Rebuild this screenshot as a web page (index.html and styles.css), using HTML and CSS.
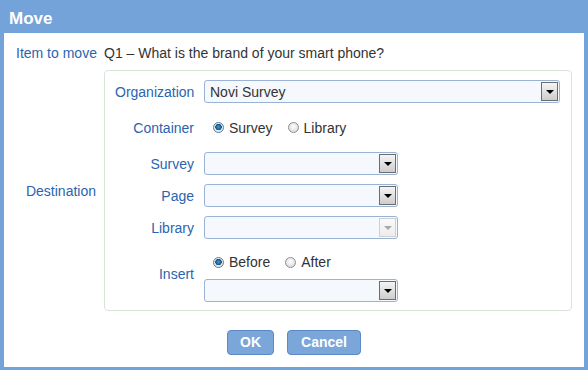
FILE: index.html
```html
<!DOCTYPE html>
<html>
<head>
<meta charset="utf-8">
<link rel="stylesheet" href="styles.css">
</head>
<body>
<div class="dialog">
  <div class="title">Move</div>
  <div class="content">
    <div class="main">
      <div class="lbl">Item to move</div>
      <div class="item">Q1 – What is the brand of your smart phone?</div>
      <div class="lbl dest">Destination</div>
      <div class="fs">
        <div class="flbl">Organization</div>
        <div class="select wide"><span class="val">Novi Survey</span><span class="arrow"></span></div>

        <div class="flbl">Container</div>
        <div class="radios">
          <span class="opt"><span class="radio on"></span>Survey</span>
          <span class="opt"><span class="radio"></span>Library</span>
        </div>

        <div class="flbl">Survey</div>
        <div class="select"><span class="val"></span><span class="arrow"></span></div>

        <div class="flbl">Page</div>
        <div class="select"><span class="val"></span><span class="arrow"></span></div>

        <div class="flbl">Library</div>
        <div class="select disabled"><span class="val"></span><span class="arrow"></span></div>

        <div class="flbl insert">Insert</div>
        <div class="insctl">
          <div class="radios ins">
            <span class="opt"><span class="radio on"></span>Before</span>
            <span class="opt"><span class="radio"></span>After</span>
          </div>
          <div class="select"><span class="val"></span><span class="arrow"></span></div>
        </div>
      </div>
    </div>
    <div class="buttons">
      <button class="btn ok">OK</button>
      <button class="btn cancel">Cancel</button>
    </div>
  </div>
</div>
</body>
</html>
```
FILE: styles.css
```css
html, body {
  margin: 0;
  padding: 0;
}
body {
  font-family: "Liberation Sans", Arial, sans-serif;
  font-size: 14px;
  color: #333;
}
.dialog {
  width: 588px;
  height: 370px;
  box-sizing: border-box;
  background: #74a3d9;
  padding: 0 4px 3px 4px;
  display: flex;
  flex-direction: column;
}
.title {
  height: 33px;
  box-sizing: border-box;
  padding: 4px 0 0 5px;
  line-height: 29px;
  color: #fff;
  font-weight: bold;
  font-size: 17px;
}
.content {
  flex: 1;
  background: #fff;
  padding: 12px 12px 0 12px;
  display: flex;
  flex-direction: column;
}
.main {
  display: grid;
  grid-template-columns: 80px 1fr;
  column-gap: 8px;
  row-gap: 9px;
}
.lbl {
  color: #2b64ae;
  text-align: right;
  line-height: 16px;
  white-space: nowrap;
}
.item {
  line-height: 16px;
  white-space: nowrap;
}
.dest {
  align-self: center;
}
.fs {
  border: 1px solid #d9e4d9;
  border-radius: 4px;
  padding: 9px 11px 8px 10px;
  display: grid;
  grid-template-columns: 79px 1fr;
  column-gap: 10px;
  row-gap: 9px;
  grid-template-rows: 23px 31px 23px 23px 23px auto;
}
.flbl {
  color: #2b64ae;
  text-align: right;
  align-self: center;
  line-height: 16px;
  white-space: nowrap;
}
.flbl.insert {
  align-self: start;
  padding-top: 18px;
}
.select {
  width: 194px;
  height: 23px;
  box-sizing: border-box;
  border: 1px solid #9ab2d4;
  border-radius: 3px;
  background: #f5f8fc;
  display: flex;
  align-items: center;
}
.select.wide {
  width: auto;
}
.val {
  flex: 1;
  padding-left: 5px;
  line-height: 16px;
  color: #333;
}
.arrow {
  width: 17px;
  height: 19px;
  box-sizing: border-box;
  margin-right: 1px;
  border: 1px solid #6d6d6d;
  background: linear-gradient(#f4f4f4, #cdcdcd);
  display: flex;
  align-items: center;
  justify-content: center;
}
.arrow::after {
  content: "";
  width: 0;
  height: 0;
  border-top: 4px solid #000;
  border-left: 4px solid transparent;
  border-right: 4px solid transparent;
  margin-top: 1px;
}
.select.disabled .arrow {
  border-color: #d0d0d0;
  background: linear-gradient(#fafafa, #ececec);
}
.select.disabled .arrow::after {
  border-top-color: #a9a9a9;
}
.radios {
  display: flex;
  align-items: center;
  padding-left: 9px;
  gap: 15px;
}
.opt {
  display: inline-flex;
  align-items: center;
  gap: 5px;
  line-height: 16px;
}
.radio {
  width: 11px;
  height: 11px;
  box-sizing: border-box;
  border-radius: 50%;
  border: 1px solid #8c8f93;
  background: radial-gradient(circle at 50% 40%, #ffffff 0%, #e4e4e4 60%, #c9c9c9 100%);
  display: inline-block;
}
.radio.on {
  border-color: #5d7d99;
  background: radial-gradient(circle at 50% 45%, #4d9bd0 0%, #1d5f93 35%, #1a4f7a 45%, #e8eef3 52%, #d3dbe2 100%);
}
.insctl {
  display: flex;
  flex-direction: column;
  gap: 3px;
}
.radios.ins {
  height: 28px;
}
.buttons {
  margin-top: 19px;
  display: flex;
  justify-content: center;
  gap: 13px;
}
.btn {
  height: 25px;
  box-sizing: border-box;
  padding: 0 12px;
  border: 1px solid #5a89c5;
  border-radius: 4px;
  background: #7aa6da;
  color: #fff;
  font-family: "Liberation Sans", Arial, sans-serif;
  font-weight: bold;
  font-size: 14px;
  line-height: 23px;
}
.btn.cancel {
  padding: 0 13px;
}
```
